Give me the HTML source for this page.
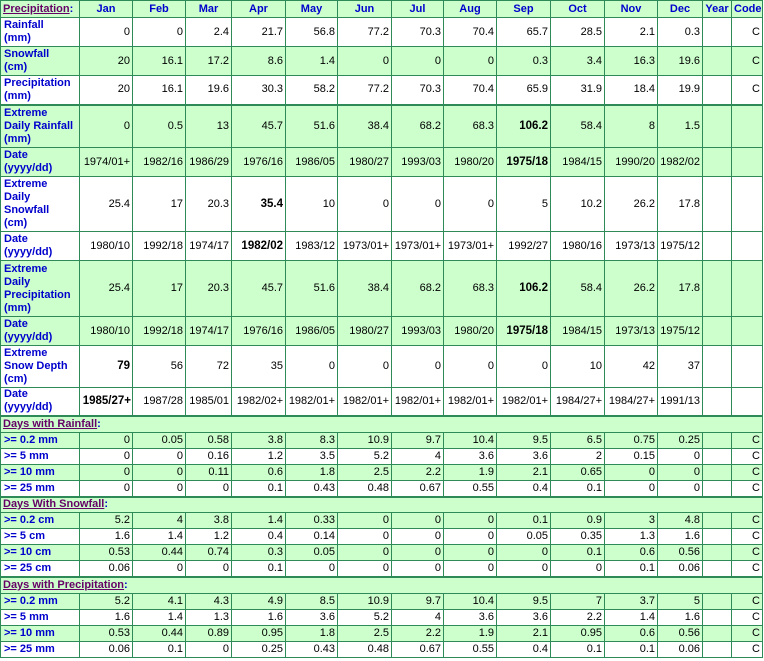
<!DOCTYPE html>
<html><head><meta charset="utf-8"><style>
body{margin:0;background:#fff;}
table{border-collapse:collapse;table-layout:fixed;width:763px;font-family:"Liberation Sans",sans-serif;font-size:11px;color:#000;border:1px solid #2e8b57;}
td{border:1px solid #2e8b57;padding:0 2px;text-align:right;white-space:nowrap;overflow:hidden;line-height:13px;}
td.l{text-align:left;font-family:"Liberation Sans",sans-serif;font-weight:bold;color:#0000cc;font-size:11px;padding:0 1px 0 3px;}
tr.h td{text-align:center;font-family:"Liberation Sans",sans-serif;font-weight:bold;color:#0000cc;font-size:11px;}
.g td{background:#ccffcc;}
.w td{background:#fff;}
.t td{border-top:2px solid #2e8b57;}
.s td{text-align:left;font-family:"Liberation Sans",sans-serif;font-weight:bold;font-size:11px;color:#0000cc;}
.s u{color:#660066;}
b{font-family:"Liberation Sans",sans-serif;font-size:11.5px;}
</style></head><body>
<table>
<colgroup><col style="width:79px"><col style="width:53px"><col style="width:53px"><col style="width:46px"><col style="width:54px"><col style="width:52px"><col style="width:54px"><col style="width:52px"><col style="width:53px"><col style="width:54px"><col style="width:54px"><col style="width:53px"><col style="width:45px"><col style="width:29px"><col style="width:31px"></colgroup>
<tr class="h g" style="height:17px"><td style="text-align:left;padding:0 2px"><u style="color:#660066">Precipitation</u>:</td><td>Jan</td><td>Feb</td><td>Mar</td><td>Apr</td><td>May</td><td>Jun</td><td>Jul</td><td>Aug</td><td>Sep</td><td>Oct</td><td>Nov</td><td>Dec</td><td>Year</td><td>Code</td></tr>
<tr class="w" style="height:29px"><td class="l">Rainfall<br>(mm)</td><td>0</td><td>0</td><td>2.4</td><td>21.7</td><td>56.8</td><td>77.2</td><td>70.3</td><td>70.4</td><td>65.7</td><td>28.5</td><td>2.1</td><td>0.3</td><td></td><td>C</td></tr>
<tr class="g" style="height:29px"><td class="l">Snowfall<br>(cm)</td><td>20</td><td>16.1</td><td>17.2</td><td>8.6</td><td>1.4</td><td>0</td><td>0</td><td>0</td><td>0.3</td><td>3.4</td><td>16.3</td><td>19.6</td><td></td><td>C</td></tr>
<tr class="w" style="height:29px"><td class="l">Precipitation<br>(mm)</td><td>20</td><td>16.1</td><td>19.6</td><td>30.3</td><td>58.2</td><td>77.2</td><td>70.3</td><td>70.4</td><td>65.9</td><td>31.9</td><td>18.4</td><td>19.9</td><td></td><td>C</td></tr>
<tr class="g t" style="height:43px"><td class="l">Extreme<br>Daily Rainfall<br>(mm)</td><td>0</td><td>0.5</td><td>13</td><td>45.7</td><td>51.6</td><td>38.4</td><td>68.2</td><td>68.3</td><td><b>106.2</b></td><td>58.4</td><td>8</td><td>1.5</td><td></td><td></td></tr>
<tr class="g" style="height:29px"><td class="l">Date<br>(yyyy/dd)</td><td>1974/01+</td><td>1982/16</td><td>1986/29</td><td>1976/16</td><td>1986/05</td><td>1980/27</td><td>1993/03</td><td>1980/20</td><td><b>1975/18</b></td><td>1984/15</td><td>1990/20</td><td>1982/02</td><td></td><td></td></tr>
<tr class="w" style="height:55px"><td class="l">Extreme<br>Daily<br>Snowfall<br>(cm)</td><td>25.4</td><td>17</td><td>20.3</td><td><b>35.4</b></td><td>10</td><td>0</td><td>0</td><td>0</td><td>5</td><td>10.2</td><td>26.2</td><td>17.8</td><td></td><td></td></tr>
<tr class="w" style="height:29px"><td class="l">Date<br>(yyyy/dd)</td><td>1980/10</td><td>1992/18</td><td>1974/17</td><td><b>1982/02</b></td><td>1983/12</td><td>1973/01+</td><td>1973/01+</td><td>1973/01+</td><td>1992/27</td><td>1980/16</td><td>1973/13</td><td>1975/12</td><td></td><td></td></tr>
<tr class="g" style="height:56px"><td class="l">Extreme<br>Daily<br>Precipitation<br>(mm)</td><td>25.4</td><td>17</td><td>20.3</td><td>45.7</td><td>51.6</td><td>38.4</td><td>68.2</td><td>68.3</td><td><b>106.2</b></td><td>58.4</td><td>26.2</td><td>17.8</td><td></td><td></td></tr>
<tr class="g" style="height:29px"><td class="l">Date<br>(yyyy/dd)</td><td>1980/10</td><td>1992/18</td><td>1974/17</td><td>1976/16</td><td>1986/05</td><td>1980/27</td><td>1993/03</td><td>1980/20</td><td><b>1975/18</b></td><td>1984/15</td><td>1973/13</td><td>1975/12</td><td></td><td></td></tr>
<tr class="w" style="height:42px"><td class="l">Extreme<br>Snow Depth<br>(cm)</td><td><b>79</b></td><td>56</td><td>72</td><td>35</td><td>0</td><td>0</td><td>0</td><td>0</td><td>0</td><td>10</td><td>42</td><td>37</td><td></td><td></td></tr>
<tr class="w" style="height:28px"><td class="l">Date<br>(yyyy/dd)</td><td style="padding:0 1px"><b>1985/27+</b></td><td>1987/28</td><td>1985/01</td><td>1982/02+</td><td>1982/01+</td><td>1982/01+</td><td>1982/01+</td><td>1982/01+</td><td>1982/01+</td><td>1984/27+</td><td>1984/27+</td><td>1991/13</td><td></td><td></td></tr>
<tr class="g t s" style="height:17px"><td colspan="15"><u>Days with Rainfall</u>:</td></tr>
<tr class="g" style="height:16px"><td class="l">&gt;= 0.2 mm</td><td>0</td><td>0.05</td><td>0.58</td><td>3.8</td><td>8.3</td><td>10.9</td><td>9.7</td><td>10.4</td><td>9.5</td><td>6.5</td><td>0.75</td><td>0.25</td><td></td><td>C</td></tr>
<tr class="w" style="height:16px"><td class="l">&gt;= 5 mm</td><td>0</td><td>0</td><td>0.16</td><td>1.2</td><td>3.5</td><td>5.2</td><td>4</td><td>3.6</td><td>3.6</td><td>2</td><td>0.15</td><td>0</td><td></td><td>C</td></tr>
<tr class="g" style="height:16px"><td class="l">&gt;= 10 mm</td><td>0</td><td>0</td><td>0.11</td><td>0.6</td><td>1.8</td><td>2.5</td><td>2.2</td><td>1.9</td><td>2.1</td><td>0.65</td><td>0</td><td>0</td><td></td><td>C</td></tr>
<tr class="w" style="height:16px"><td class="l">&gt;= 25 mm</td><td>0</td><td>0</td><td>0</td><td>0.1</td><td>0.43</td><td>0.48</td><td>0.67</td><td>0.55</td><td>0.4</td><td>0.1</td><td>0</td><td>0</td><td></td><td>C</td></tr>
<tr class="g t s" style="height:16px"><td colspan="15"><u>Days With Snowfall</u>:</td></tr>
<tr class="g" style="height:16px"><td class="l">&gt;= 0.2 cm</td><td>5.2</td><td>4</td><td>3.8</td><td>1.4</td><td>0.33</td><td>0</td><td>0</td><td>0</td><td>0.1</td><td>0.9</td><td>3</td><td>4.8</td><td></td><td>C</td></tr>
<tr class="w" style="height:16px"><td class="l">&gt;= 5 cm</td><td>1.6</td><td>1.4</td><td>1.2</td><td>0.4</td><td>0.14</td><td>0</td><td>0</td><td>0</td><td>0.05</td><td>0.35</td><td>1.3</td><td>1.6</td><td></td><td>C</td></tr>
<tr class="g" style="height:16px"><td class="l">&gt;= 10 cm</td><td>0.53</td><td>0.44</td><td>0.74</td><td>0.3</td><td>0.05</td><td>0</td><td>0</td><td>0</td><td>0</td><td>0.1</td><td>0.6</td><td>0.56</td><td></td><td>C</td></tr>
<tr class="w" style="height:16px"><td class="l">&gt;= 25 cm</td><td>0.06</td><td>0</td><td>0</td><td>0.1</td><td>0</td><td>0</td><td>0</td><td>0</td><td>0</td><td>0</td><td>0.1</td><td>0.06</td><td></td><td>C</td></tr>
<tr class="g t s" style="height:17px"><td colspan="15"><u>Days with Precipitation</u>:</td></tr>
<tr class="g" style="height:16px"><td class="l">&gt;= 0.2 mm</td><td>5.2</td><td>4.1</td><td>4.3</td><td>4.9</td><td>8.5</td><td>10.9</td><td>9.7</td><td>10.4</td><td>9.5</td><td>7</td><td>3.7</td><td>5</td><td></td><td>C</td></tr>
<tr class="w" style="height:16px"><td class="l">&gt;= 5 mm</td><td>1.6</td><td>1.4</td><td>1.3</td><td>1.6</td><td>3.6</td><td>5.2</td><td>4</td><td>3.6</td><td>3.6</td><td>2.2</td><td>1.4</td><td>1.6</td><td></td><td>C</td></tr>
<tr class="g" style="height:16px"><td class="l">&gt;= 10 mm</td><td>0.53</td><td>0.44</td><td>0.89</td><td>0.95</td><td>1.8</td><td>2.5</td><td>2.2</td><td>1.9</td><td>2.1</td><td>0.95</td><td>0.6</td><td>0.56</td><td></td><td>C</td></tr>
<tr class="w" style="height:16px"><td class="l">&gt;= 25 mm</td><td>0.06</td><td>0.1</td><td>0</td><td>0.25</td><td>0.43</td><td>0.48</td><td>0.67</td><td>0.55</td><td>0.4</td><td>0.1</td><td>0.1</td><td>0.06</td><td></td><td>C</td></tr>
</table>
</body></html>
